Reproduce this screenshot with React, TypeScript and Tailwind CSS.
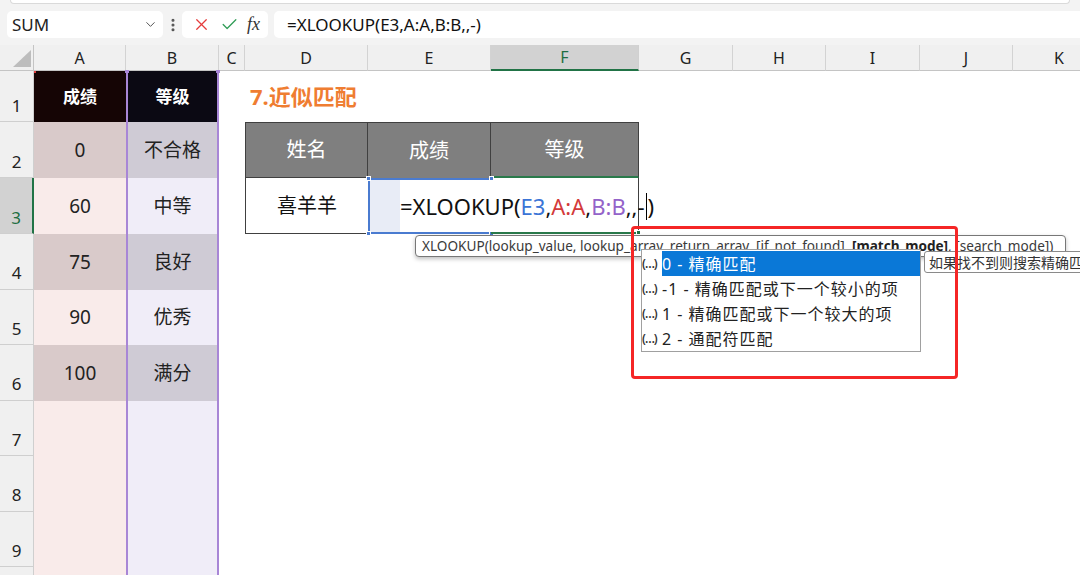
import React from "react";
import { ChevronDown, EllipsisVertical, X, Check } from "lucide-react";

const grades = [
    { score: "0", grade: "不合格" },
    { score: "60", grade: "中等" },
    { score: "75", grade: "良好" },
    { score: "90", grade: "优秀" },
    { score: "100", grade: "满分" },
];

const colHeads = [
    { key: "A", w: "w-[92px]" },
    { key: "B", w: "w-[93px]" },
    { key: "C", w: "w-[26px]" },
    { key: "D", w: "w-[123px]" },
    { key: "E", w: "w-[123px]" },
    { key: "F", w: "w-[148px]" },
    { key: "G", w: "w-[94px]" },
    { key: "H", w: "w-[93px]" },
    { key: "I", w: "w-[94px]" },
    { key: "J", w: "w-[93px]" },
    { key: "K", w: "w-[93px]" },
];

const options = [
    "0 - 精确匹配",
    "-1 - 精确匹配或下一个较小的项",
    "1 - 精确匹配或下一个较大的项",
    "2 - 通配符匹配",
];

type RowProps = {
    n?: number;
    h: string;
    dark?: boolean;
    selected?: boolean;
    score?: string;
    grade?: string;
    children?: React.ReactNode;
};

const Row = ({ n, h, dark, selected, score, grade, children }: RowProps) => (
    <div className={`flex ${h}`}>
        {/* row number */}
        <div
            className={
                selected
                    ? "w-[34px] shrink-0 flex items-end justify-center pb-[3px] text-[17px] bg-[#d2d2d2] text-[#1e6e42] border-r-2 border-r-[#217346] border-b border-b-[#cfcfcf]"
                    : "w-[34px] shrink-0 flex items-end justify-center pb-[3px] text-[17px] bg-[#f0f0f0] text-[#222] border-r border-b border-[#cfcfcf]"
            }
        >
            {n}
        </div>

        {/* A / B */}
        <div
            className={`w-[92px] shrink-0 flex items-center justify-center text-[19px] text-[#222] ${
                dark ? "bg-[#d9caca]" : "bg-[#f9ebea]"
            }`}
        >
            {score}
        </div>
        <div
            className={`w-[93px] shrink-0 flex items-center justify-center text-[19px] text-[#222] border-x-2 border-[#a886d6] ${
                dark ? "bg-[#cfcbd5]" : "bg-[#f0edf8]"
            }`}
        >
            {grade}
        </div>
        <div className="w-[26px] shrink-0" />

        {children}
    </div>
);

const Handle = ({ className }: { className: string }) => (
    <span className={`absolute w-[5px] h-[5px] bg-[#4a7bd0] border border-white ${className}`} />
);

const App = () => {
    return (
        <div className="relative w-[1080px] h-[575px] overflow-hidden bg-white font-['Noto_Sans','Noto_Sans_CJK_SC',sans-serif]">
            {/* Formula bar */}
            <div className="h-[45px] bg-[#f3f3f3]">
                <div className="h-[4px] mx-[10px] bg-white border-x border-b border-[#dadada] rounded-b-[4px]" />
                <div className="mt-[7px] h-[27px] flex items-center pl-[7px]">
                    <div className="w-[156px] h-full shrink-0 bg-white rounded-[5px] flex items-center justify-between pl-[5px] pr-[5px]">
                        <span className="text-[17px] text-[#222]">SUM</span>
                        <ChevronDown size={15} strokeWidth={1.6} className="text-[#555]" />
                    </div>
                    <div className="w-[19px] shrink-0 flex justify-center text-[#555]">
                        <EllipsisVertical size={16} strokeWidth={2.6} />
                    </div>
                    <div className="w-[86px] h-full shrink-0 bg-white rounded-[5px] flex items-center pl-[10px]">
                        <X size={19} strokeWidth={1.6} className="text-[#e53b3b]" />
                        <Check size={19} strokeWidth={1.6} className="ml-[9px] text-[#2f9c55]" />
                        <span className="ml-[8px] text-[18px] italic text-[#333] font-['Liberation_Serif',serif]">fx</span>
                    </div>
                    <div className="ml-[6px] flex-1 h-full bg-white rounded-l-[5px] flex items-center pl-[13px] text-[17px] text-[#111]">
                        =XLOOKUP(E3,A:A,B:B,,-)
                    </div>
                </div>
            </div>

            {/* Column headers */}
            <div className="flex h-[26px] text-[16px] text-[#222]">
                <div className="w-[34px] shrink-0 relative bg-[#f0f0f0] border-r border-b border-[#c4c4c4]">
                    <svg className="absolute left-[13px] top-[5px]" width="18" height="17" viewBox="0 0 18 17">
                        <polygon points="18,0 18,17 0,17" fill="#bdbdbd" />
                    </svg>
                </div>
                {colHeads.map((c) => (
                    <div
                        key={c.key}
                        className={
                            c.key === "F"
                                ? `${c.w} shrink-0 flex items-center justify-center bg-[#d2d2d2] text-[#1e6e42] border-r border-r-[#d0d0d0] border-b-2 border-b-[#217346]`
                                : `${c.w} shrink-0 flex items-center justify-center bg-[#f0f0f0] border-r border-r-[#d3d3d3] border-b border-b-[#c4c4c4]`
                        }
                    >
                        {c.key}
                    </div>
                ))}
            </div>

            {/* Sheet */}
            <div className="flex flex-col">
                {/* row 1 */}
                <div className="flex h-[51px]">
                    <div className="w-[34px] shrink-0 flex items-end justify-center pb-[3px] text-[17px] bg-[#f0f0f0] text-[#222] border-r border-b border-[#cfcfcf]">
                        1
                    </div>
                    <div className="w-[92px] shrink-0 relative flex items-center justify-center bg-[#150505] text-white font-bold text-[17px]">
                        成绩
                        <span className="absolute left-0 top-0 w-[2px] h-[2px] bg-[#e04040]" />
                    </div>
                    <div className="w-[93px] shrink-0 relative flex items-center justify-center bg-[#0b0913] text-white font-bold text-[17px] border-x-2 border-[#a886d6]">
                        等级
                        <span className="absolute -left-[3px] -top-[1px] w-[4px] h-[3px] bg-[#a886d6]" />
                        <span className="absolute -right-[3px] -top-[1px] w-[4px] h-[3px] bg-[#a886d6]" />
                    </div>
                    <div className="w-[26px] shrink-0" />
                    <div className="w-[123px] shrink-0 flex items-center pl-[5px]">
                        <span className="whitespace-nowrap text-[22px] font-bold text-[#ef7d31]">7.近似匹配</span>
                    </div>
                </div>

                {/* row 2 : table header */}
                <Row n={2} h="h-[56px]" dark score={grades[0].score} grade={grades[0].grade}>
                    <div className="w-[123px] shrink-0 flex items-center justify-center bg-[#7f7f7f] text-white text-[20px] border border-[#404040]">
                        姓名
                    </div>
                    <div className="w-[123px] shrink-0 flex items-center justify-center bg-[#7f7f7f] text-white text-[20px] border-t border-r border-[#404040]">
                        成绩
                    </div>
                    <div className="w-[148px] shrink-0 flex items-center justify-center bg-[#7f7f7f] text-white text-[20px] border-t border-r border-[#404040] border-b-2 border-b-[#2a7a4b]">
                        等级
                    </div>
                </Row>

                {/* row 3 : editing */}
                <Row n={3} h="h-[56px]" selected score={grades[1].score} grade={grades[1].grade}>
                    <div className="w-[123px] shrink-0 flex items-center justify-center text-[20px] text-[#111] border-l border-b border-[#404040]">
                        喜羊羊
                    </div>
                    <div className="w-[123px] shrink-0 relative flex items-center border-l-2 border-t-2 border-b-2 border-[#4a7bd0]">
                        <div className="w-[30px] shrink-0 h-full bg-[#e8ecf6]" />
                        <span className="relative z-10 shrink-0 whitespace-nowrap text-[22px] text-[#111] flex items-center">
                            =XLOOKUP(<span className="text-[#3b74d6]">E3</span>,
                            <span className="text-[#d33a3a]">A:A</span>,
                            <span className="text-[#9463c9]">B:B</span>,,-
                            <span className="inline-block w-px h-[27px] bg-black mx-[1px]" />)
                        </span>
                        <Handle className="-left-[4px] -top-[4px]" />
                        <Handle className="-left-[4px] -bottom-[4px]" />
                        <Handle className="-right-[3px] -top-[4px]" />
                        <Handle className="-right-[3px] -bottom-[4px]" />
                    </div>
                    <div className="w-[148px] shrink-0 relative border-r border-r-[#404040] border-b-2 border-b-[#2a7a4b]">
                        <span className="absolute -right-[3px] -bottom-[3px] w-[5px] h-[5px] bg-[#217346] border border-white" />
                    </div>
                </Row>

                <Row n={4} h="h-[55.5px]" dark score={grades[2].score} grade={grades[2].grade} />
                <Row n={5} h="h-[55.5px]" score={grades[3].score} grade={grades[3].grade} />
                <Row n={6} h="h-[55.5px]" dark score={grades[4].score} grade={grades[4].grade} />
                <Row n={7} h="h-[55.5px]" />
                <Row n={8} h="h-[55.5px]" />
                <Row n={9} h="h-[55.5px]" />
                <Row h="h-[20px]" />
            </div>

            {/* Function signature tip */}
            <div className="absolute left-[415px] top-[235px] w-[651px] h-[22px] flex items-center pl-[6px] bg-white border border-[#777] rounded-[4px] shadow-[0_2px_4px_rgba(0,0,0,0.25)] whitespace-nowrap text-[13.6px] text-[#3a3a3a]">
                XLOOKUP(lookup_value, lookup_array, return_array, [if_not_found],&nbsp;
                <b className="text-[#222]">[match_mode]</b>, [search_mode])
            </div>

            {/* Argument dropdown */}
            <div className="absolute left-[641px] top-[249px] w-[280px] h-[103px] bg-white border border-[#a0a0a0] pt-[1px]">
                {options.map((opt, i) => (
                    <div key={opt} className="flex h-[25px] items-center">
                        <span className="w-[20px] shrink-0 text-[12px] font-semibold tracking-[-1px] text-[#333] whitespace-nowrap">(…)</span>
                        <span
                            className={
                                i === 0
                                    ? "flex-1 h-full flex items-center bg-[#0a78d7] text-white text-[16px] tracking-[1px] whitespace-nowrap"
                                    : "flex-1 h-full flex items-center text-[#222] text-[16px] tracking-[1px] whitespace-nowrap"
                            }
                        >
                            {opt}
                        </span>
                    </div>
                ))}
            </div>

            {/* Description tip */}
            <div className="absolute left-[924px] top-[251px] w-[200px] h-[22px] flex items-center pl-[4px] bg-white border border-[#8a8a8a] rounded-[3px] whitespace-nowrap text-[14px] text-[#333]">
                如果找不到则搜索精确匹配
            </div>

            {/* Red highlight */}
            <div className="absolute left-[631px] top-[226px] w-[327px] h-[153px] border-[3px] border-[#f52626] rounded-[4px]" />
        </div>
    );
};

export default App;
